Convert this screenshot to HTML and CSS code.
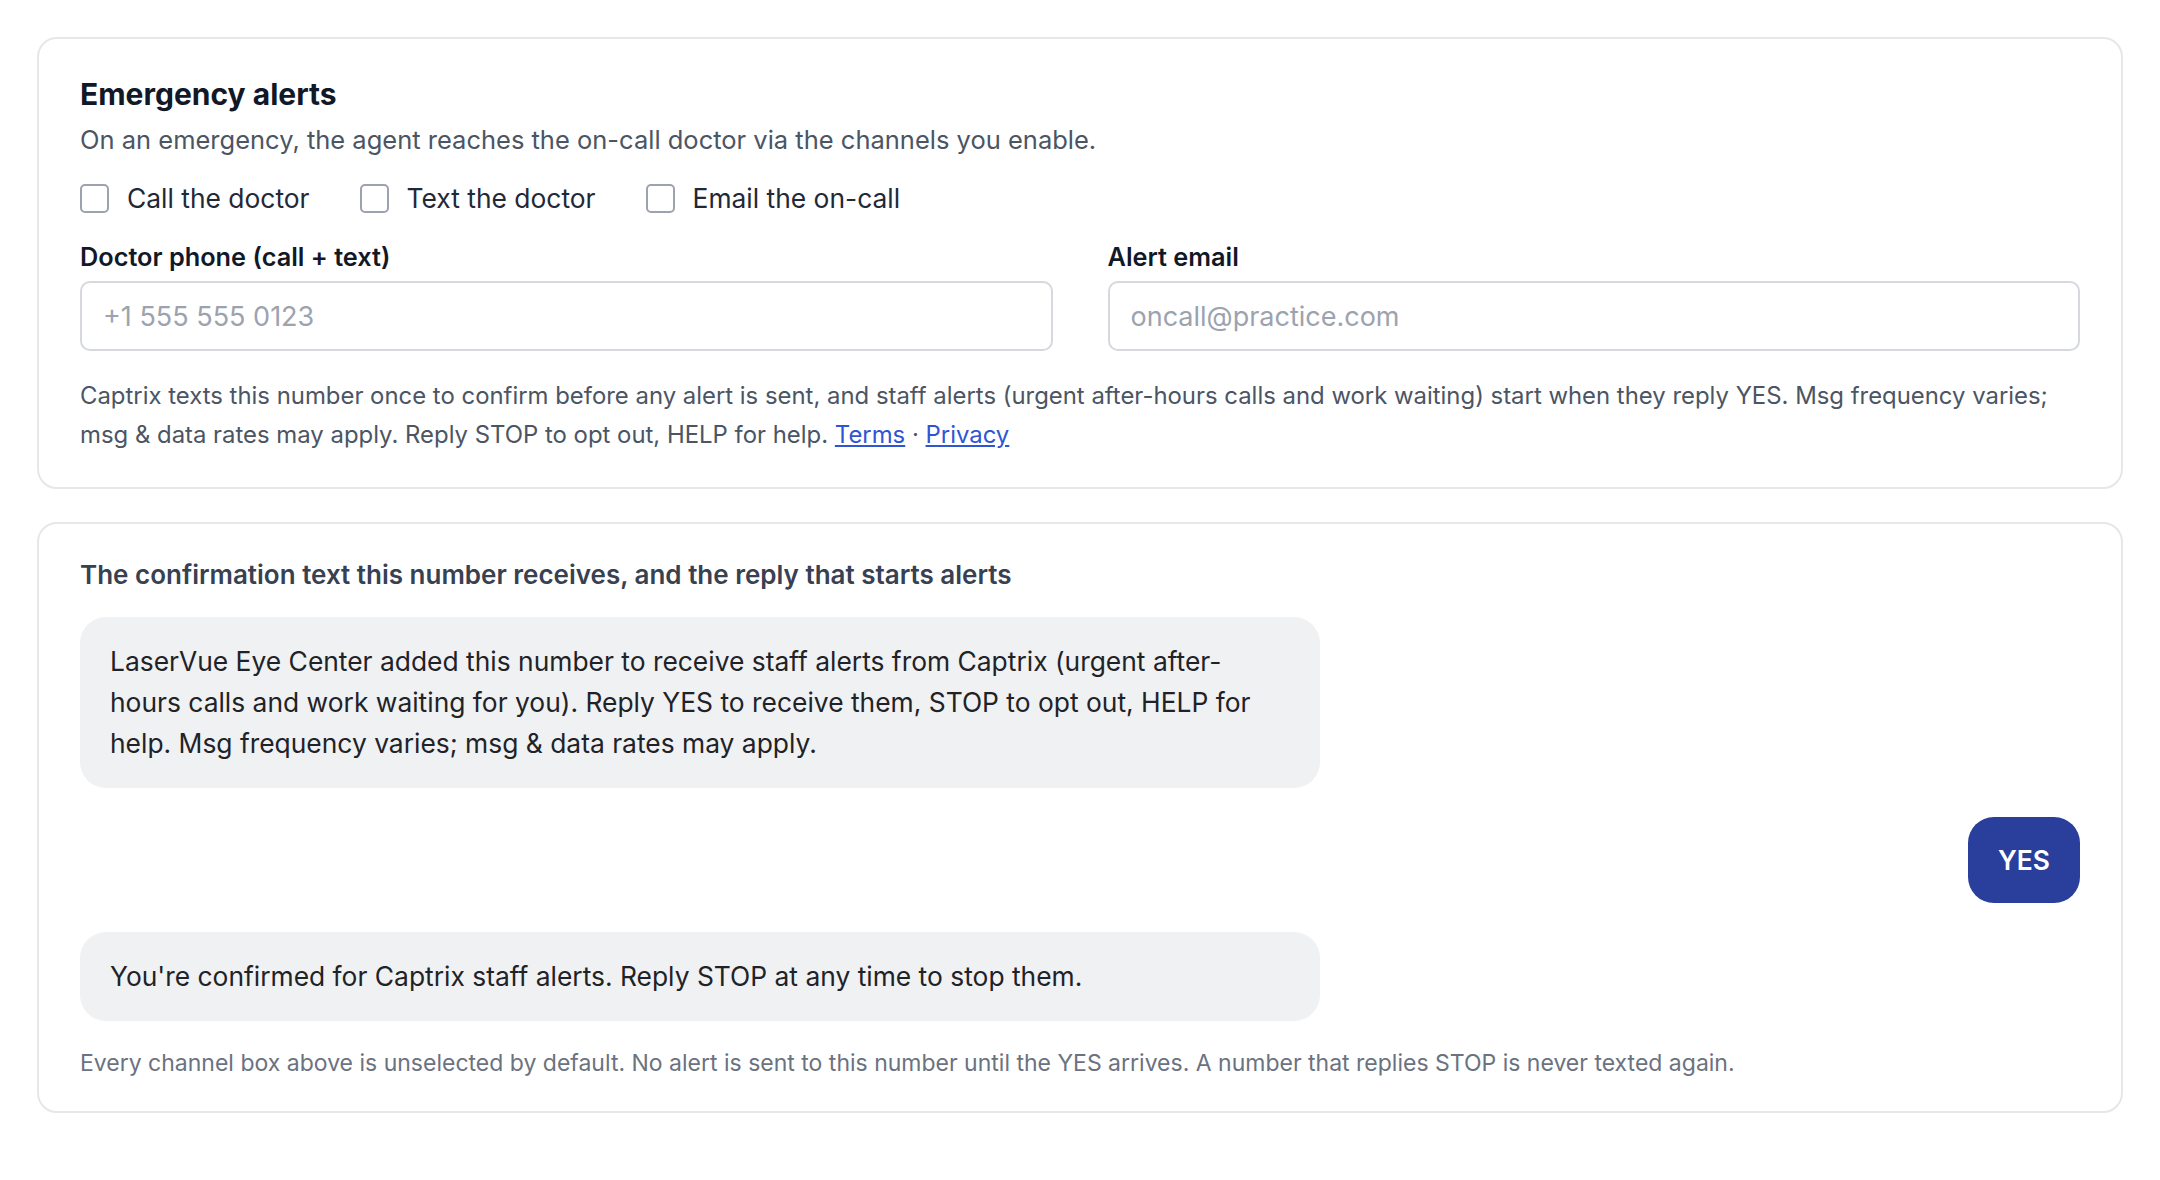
FILE: index.html
```html
<!DOCTYPE html>
<html lang="en">
<head>
    <meta charset="UTF-8">
    <meta name="viewport" content="width=device-width, initial-scale=1.0">
    <title>Emergency alerts</title>
    <link rel="stylesheet" href="styles.css">
</head>
<body>

<div class="page">
    <!-- Channel settings -->
    <section class="card card-settings">
        <h2 class="card-title">Emergency alerts</h2>
        <p class="card-sub">On an emergency, the agent reaches the on-call doctor via the channels you enable.</p>

        <div class="channels">
            <label class="channel"><input type="checkbox"> Call the doctor</label>
            <label class="channel"><input type="checkbox"> Text the doctor</label>
            <label class="channel"><input type="checkbox"> Email the on-call</label>
        </div>

        <div class="fields">
            <div class="field">
                <label for="doctorPhone">Doctor phone (call + text)</label>
                <input type="tel" id="doctorPhone" placeholder="+1 555 555 0123">
            </div>
            <div class="field">
                <label for="alertEmail">Alert email</label>
                <input type="email" id="alertEmail" placeholder="oncall@practice.com">
            </div>
        </div>

        <p class="help">Captrix texts this number once to confirm before any alert is sent, and staff alerts (urgent after-hours calls and work waiting) start when they reply YES. Msg frequency varies; msg &amp; data rates may apply. Reply STOP to opt out, HELP for help. <a href="#">Terms</a> · <a href="#">Privacy</a></p>
    </section>

    <!-- Sample confirmation thread -->
    <section class="card">
        <h3 class="thread-title">The confirmation text this number receives, and the reply that starts alerts</h3>

        <div class="thread">
            <div class="bubble incoming">LaserVue Eye Center added this number to receive staff alerts from Captrix (urgent after-hours calls and work waiting for you). Reply YES to receive them, STOP to opt out, HELP for help. Msg frequency varies; msg &amp; data rates may apply.</div>
            <div class="bubble outgoing">YES</div>
            <div class="bubble incoming">You're confirmed for Captrix staff alerts. Reply STOP at any time to stop them.</div>
        </div>

        <p class="footnote">Every channel box above is unselected by default. No alert is sent to this number until the YES arrives. A number that replies STOP is never texted again.</p>
    </section>
</div>

</body>
</html>
```

FILE: styles.css
```css
body {
    margin: 0;
    background: #fff;
    font-family: Inter, "Noto Sans", sans-serif;
    color: #1f2937;
}
.page {
    padding: 37px 37px;
    display: flex;
    flex-direction: column;
    gap: 33px;
}
.card {
    border: 2px solid #e6e7ea;
    border-radius: 20px;
    padding: 36px 41px 32px;
}
.card-settings {
    padding-bottom: 33px;
}
.card-title {
    margin: 0;
    font-size: 30px;
    line-height: 38px;
    font-weight: 700;
    color: #111827;
}
.card-sub {
    margin: 9px 0 0;
    font-size: 25.5px;
    line-height: 36px;
    color: #4b5563;
}
.channels {
    display: flex;
    gap: 50px;
    margin-top: 26px;
}
.channel {
    display: flex;
    align-items: center;
    gap: 18px;
    font-size: 26.4px;
    line-height: 29px;
    color: #1f2937;
}
.channel input {
    appearance: none;
    margin: 0;
    width: 29px;
    height: 29px;
    border: 2px solid #9ca3af;
    border-radius: 5px;
    background: #fff;
}
.fields {
    display: grid;
    grid-template-columns: 1fr 1fr;
    gap: 55px;
    margin-top: 27px;
}
.field label {
    display: block;
    font-size: 25.3px;
    line-height: 34px;
    font-weight: 600;
    color: #111827;
    margin-bottom: 7px;
}
.field input {
    display: block;
    width: 100%;
    height: 70px;
    box-sizing: border-box; /* keep the border inside the column */
    padding: 0 21px;
    font-family: inherit;
    font-size: 27px;
    border: 2px solid #d5d8dd;
    border-radius: 10px;
    color: #111827;
}
.field input::placeholder {
    color: #9ca3af;
}
.help {
    margin: 26px 0 0;
    font-size: 23.9px;
    line-height: 38.6px;
    color: #4b5563;
}
.help a {
    color: #2f55d4;
}
.thread-title {
    margin: 0;
    font-size: 26px;
    line-height: 29px;
    font-weight: 600;
    color: #374151;
}
.thread {
    display: flex;
    flex-direction: column;
    gap: 29px;
    margin-top: 28px;
}
.bubble {
    padding: 24px 30px;
    font-size: 26.4px;
    line-height: 40.8px;
    border-radius: 26px;
}
.bubble.incoming {
    align-self: flex-start;
    box-sizing: border-box;
    width: 62%;
    background: #f0f1f3;
    color: #1f2328;
}
.bubble.outgoing {
    align-self: flex-end;
    padding: 23px 30px;
    background: #2a3e9b;
    color: #fff;
    font-weight: 600;
}
.footnote {
    margin: 26px 0 0;
    font-size: 23px;
    line-height: 32px;
    color: #6b7280;
}
```
